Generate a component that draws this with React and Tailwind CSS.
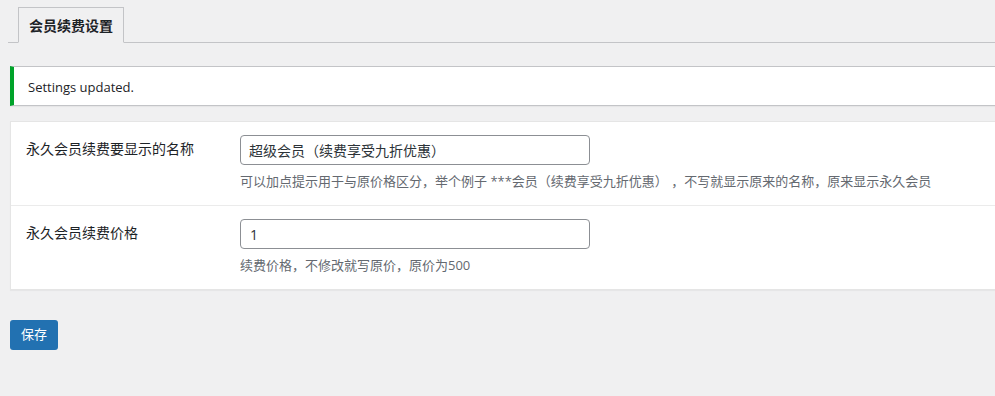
export default function App() {
  const font = { fontFamily: '"Open Sans", "Noto Sans CJK SC", sans-serif' };
  return (
    <div className="min-h-[396px] w-[995px] overflow-hidden bg-[#f0f0f1] text-[#1d2327]" style={font}>
      <div className="w-[1020px] pl-[8px] pt-[7px]">
        <div className="flex border-b border-[#c3c4c7]">
          <div className="ml-[10px] -mb-px flex h-[36px] items-center border border-[#c3c4c7] border-b-[#f0f0f1] bg-[#f0f0f1] px-[10px] text-[14px] font-semibold text-[#1d2327]">
            会员续费设置
          </div>
        </div>
      </div>
      <div className="w-[1020px] pl-[10px]">
        <div className="mt-[23px] flex h-[40px] items-center border border-l-4 border-[#c3c4c7] border-l-[#00a32a] bg-white pl-[14px] pt-[3px] text-[13px] text-[#1d2327] shadow-[0_1px_1px_rgba(0,0,0,0.04)]">
          Settings updated.
        </div>
        <div className="mt-[15px] border border-[#e5e5e5] bg-white shadow-[0_1px_1px_rgba(0,0,0,0.04)]">
          <div className="flex h-[84px] border-b border-[#ebebeb] pl-[15px]">
            <div className="w-[214px] pt-[17px] text-[14px] leading-5">永久会员续费要显示的名称</div>
            <div className="pt-[13px]">
              <div className="flex h-[30px] w-[350px] items-center rounded-[4px] border border-[#8c8f94] px-[8px] text-[14px] text-[#2c3338]">
                超级会员（续费享受九折优惠）
              </div>
              <div className="mt-[6px] text-[13px] leading-5 text-[#646970]">
                可以加点提示用于与原价格区分，举个例子 ***会员（续费享受九折优惠） ，不写就显示原来的名称，原来显示永久会员
              </div>
            </div>
          </div>
          <div className="flex h-[83px] pl-[15px]">
            <div className="w-[214px] pt-[17px] text-[14px] leading-5">永久会员续费价格</div>
            <div className="pt-[13px]">
              <div className="flex h-[30px] w-[350px] items-center rounded-[4px] border border-[#8c8f94] px-[9px] text-[14px] text-[#2c3338]">
                1
              </div>
              <div className="mt-[6px] text-[13px] leading-5 text-[#646970]">
                续费价格，不修改就写原价，原价为500
              </div>
            </div>
          </div>
        </div>
        <div className="mt-[30px]">
          <button className="flex h-[30px] w-[48px] items-center justify-center rounded-[3px] bg-[#2271b1] text-[13px] text-white">
            保存
          </button>
        </div>
      </div>
    </div>
  );
}
